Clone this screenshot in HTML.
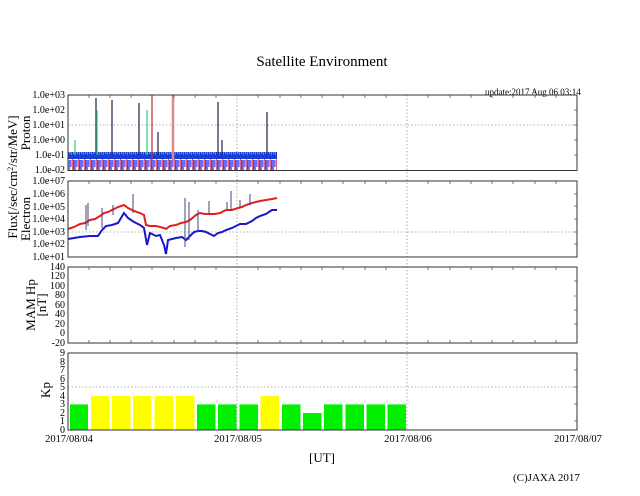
<!DOCTYPE html>
<html><head><meta charset="utf-8"><style>
html,body{margin:0;padding:0;background:#fff;width:640px;height:496px;overflow:hidden}
svg{display:block}
text{font-family:"Liberation Serif",serif;fill:#000}
</style></head><body>
<svg width="640" height="496" viewBox="0 0 640 496">
<defs>
<pattern id="st" width="6" height="20" patternUnits="userSpaceOnUse">
<rect width="6" height="20" fill="#fff"/>
<rect x="0" width="1.2" height="20" fill="#e0607a"/>
<rect x="1.2" width="1.5" height="11" fill="#2a2ad0"/>
<rect x="3" width="1" height="16" fill="#d55"/>
<rect x="4.2" width="1.3" height="7" fill="#44f"/>
</pattern>
<pattern id="st2" width="4" height="10" patternUnits="userSpaceOnUse">
<rect width="4" height="10" fill="#1c3cd8"/>
<rect x="1" width="1.2" height="4" fill="#30c080"/>
<rect x="3" y="2" width="1" height="3" fill="#3a6"/>
</pattern>
</defs>
<text x="322" y="66" font-size="15" text-anchor="middle">Satellite Environment</text>
<text x="485" y="95" font-size="9">update:2017 Aug 06 03:14</text>

<g stroke="#999" stroke-width="0.8" stroke-dasharray="1.5,2" fill="none">
<line x1="237" y1="95" x2="237" y2="430"/>
<line x1="407" y1="95" x2="407" y2="430"/>
<line x1="68" y1="125" x2="577" y2="125"/>
<line x1="68" y1="232" x2="577" y2="232"/>
<line x1="68" y1="387" x2="577" y2="387"/>
</g>

<rect x="68" y="158" width="209" height="12" fill="url(#st)"/>
<rect x="68" y="152" width="209" height="7" fill="url(#st2)"/>
<g stroke-width="1.2" fill="none">
<line x1="96" y1="98" x2="96" y2="155" stroke="#224"/>
<line x1="97" y1="110" x2="97" y2="155" stroke="#3c8"/>
<line x1="75" y1="140" x2="75" y2="155" stroke="#3c8"/>
<line x1="112" y1="100" x2="112" y2="155" stroke="#224"/>
<line x1="139" y1="103" x2="139" y2="155" stroke="#224"/>
<line x1="147" y1="110" x2="147" y2="155" stroke="#3c8"/>
<line x1="152" y1="95" x2="152" y2="160" stroke="#a33"/>
<line x1="158" y1="132" x2="158" y2="155" stroke="#224"/>
<line x1="173" y1="95" x2="173" y2="160" stroke="#d88" stroke-width="2.5"/>
<line x1="218" y1="102" x2="218" y2="155" stroke="#224"/>
<line x1="222" y1="140" x2="222" y2="155" stroke="#224"/>
<line x1="267" y1="112" x2="267" y2="155" stroke="#224"/>
</g>

<polyline fill="none" stroke="#e02020" stroke-width="2" points="68,229 74,227 80,224 85,223 90,220 95,219 100,216 104,213 108,212 112,210 118,207 124,205 128,208 134,211 140,213 144,215 146,225 150,226 156,226 160,227 164,228 166,229 170,226 176,225 181,223 186,222 190,220 196,215 200,213 205,214 210,214 215,214 220,213 226,210 232,210 238,208 242,207 246,205 252,203 256,202 260,201 266,200 272,199 277,198"/>
<polyline fill="none" stroke="#1818c8" stroke-width="2" points="68,239 74,238 80,237 90,236 98,236 102,230 106,226 112,225 118,223 124,213 128,218 134,222 140,225 144,228 147,245 150,233 156,236 160,235 164,245 166,254 168,240 172,239 176,238 182,237 186,240 190,236 194,232 198,231 202,231 206,232 210,234 214,236 218,233 222,232 226,230 232,228 236,226 240,224 246,224 252,221 256,218 260,216 266,214 272,210 277,210"/>
<g stroke="#447" stroke-width="1">
<line x1="86" y1="205" x2="86" y2="230"/><line x1="88" y1="203" x2="88" y2="226"/>
<line x1="102" y1="208" x2="102" y2="228"/><line x1="113" y1="205" x2="113" y2="215"/>
<line x1="133" y1="194" x2="133" y2="213"/><line x1="185" y1="198" x2="185" y2="247"/>
<line x1="189" y1="202" x2="189" y2="240"/><line x1="198" y1="210" x2="198" y2="232"/>
<line x1="209" y1="201" x2="209" y2="214"/><line x1="227" y1="202" x2="227" y2="210"/>
<line x1="231" y1="191" x2="231" y2="210"/><line x1="240" y1="200" x2="240" y2="208"/>
<line x1="250" y1="194" x2="250" y2="205"/>
</g>

<g>
<rect x="70" y="404.4" width="18" height="25.6" fill="#00f000"/>
<rect x="91" y="395.8" width="18.5" height="34.2" fill="#ffff00"/>
<rect x="112" y="395.8" width="18.5" height="34.2" fill="#ffff00"/>
<rect x="133" y="395.8" width="18.5" height="34.2" fill="#ffff00"/>
<rect x="154.5" y="395.8" width="18.5" height="34.2" fill="#ffff00"/>
<rect x="176" y="395.8" width="18.5" height="34.2" fill="#ffff00"/>
<rect x="197" y="404.4" width="18.5" height="25.6" fill="#00f000"/>
<rect x="218" y="404.4" width="18.5" height="25.6" fill="#00f000"/>
<rect x="239.5" y="404.4" width="18.5" height="25.6" fill="#00f000"/>
<rect x="260.5" y="395.8" width="18.5" height="34.2" fill="#ffff00"/>
<rect x="282" y="404.4" width="18.5" height="25.6" fill="#00f000"/>
<rect x="303" y="413" width="18.5" height="17" fill="#00f000"/>
<rect x="324" y="404.4" width="18.5" height="25.6" fill="#00f000"/>
<rect x="345.5" y="404.4" width="18.5" height="25.6" fill="#00f000"/>
<rect x="366.5" y="404.4" width="18.5" height="25.6" fill="#00f000"/>
<rect x="387.5" y="404.4" width="18.5" height="25.6" fill="#00f000"/>
</g>

<g fill="none" stroke="#333" stroke-width="1">
<rect x="68" y="95" width="509" height="75.5"/>
<rect x="68" y="181" width="509" height="76"/>
<rect x="68" y="267" width="509" height="76"/>
<rect x="68" y="353" width="509" height="77"/>
</g>
<g stroke="#555" stroke-width="0.8">
<path d="M89,95v3M110,95v3M131,95v3M152,95v3M174,95v3M195,95v3M216,95v3M258,95v3M280,95v3M301,95v3M322,95v3M343,95v3M365,95v3M386,95v3M428,95v3M450,95v3M471,95v3M492,95v3M513,95v3M535,95v3M556,95v3"/>
<path d="M89,181v3M110,181v3M131,181v3M152,181v3M174,181v3M195,181v3M216,181v3M258,181v3M280,181v3M301,181v3M322,181v3M343,181v3M365,181v3M386,181v3M428,181v3M450,181v3M471,181v3M492,181v3M513,181v3M535,181v3M556,181v3"/>
<path d="M89,267v3M110,267v3M131,267v3M152,267v3M174,267v3M195,267v3M216,267v3M258,267v3M280,267v3M301,267v3M322,267v3M343,267v3M365,267v3M386,267v3M428,267v3M450,267v3M471,267v3M492,267v3M513,267v3M535,267v3M556,267v3"/>
<path d="M89,343v-3M110,343v-3M131,343v-3M152,343v-3M174,343v-3M195,343v-3M216,343v-3M258,343v-3M280,343v-3M301,343v-3M322,343v-3M343,343v-3M365,343v-3M386,343v-3M428,343v-3M450,343v-3M471,343v-3M492,343v-3M513,343v-3M535,343v-3M556,343v-3"/>
<path d="M577,110h-3M577,125h-3M577,140h-3M577,155h-3M577,194h-3M577,206h-3M577,219h-3M577,232h-3M577,244h-3M577,281h-3M577,296h-3M577,310h-3M577,324h-3M577,370h-3M577,387h-3M577,404h-3M577,421h-3"/>
</g>

<g font-size="10" text-anchor="end">
<text x="65" y="98">1.0e+03</text><text x="65" y="113">1.0e+02</text><text x="65" y="128">1.0e+01</text>
<text x="65" y="143">1.0e+00</text><text x="65" y="158">1.0e-01</text><text x="65" y="173">1.0e-02</text>
<text x="65" y="184">1.0e+07</text><text x="65" y="197">1.0e+06</text><text x="65" y="210">1.0e+05</text>
<text x="65" y="222">1.0e+04</text><text x="65" y="235">1.0e+03</text><text x="65" y="247">1.0e+02</text>
<text x="65" y="260">1.0e+01</text>
<text x="65" y="270">140</text><text x="65" y="279">120</text><text x="65" y="289">100</text>
<text x="65" y="298">80</text><text x="65" y="308">60</text><text x="65" y="317">40</text>
<text x="65" y="327">20</text><text x="65" y="336">0</text><text x="65" y="346">-20</text>
<text x="65" y="356">9</text><text x="65" y="365">8</text><text x="65" y="373">7</text>
<text x="65" y="382">6</text><text x="65" y="390">5</text><text x="65" y="399">4</text>
<text x="65" y="407">3</text><text x="65" y="416">2</text><text x="65" y="424">1</text>
<text x="65" y="433">0</text>
</g>
<g font-size="10.5" text-anchor="middle">
<text x="69" y="442">2017/08/04</text><text x="238" y="442">2017/08/05</text>
<text x="408" y="442">2017/08/06</text><text x="578" y="442">2017/08/07</text>
</g>
<text x="322" y="462" font-size="13" text-anchor="middle">[UT]</text>
<text x="513" y="481" font-size="11">(C)JAXA 2017</text>

<g font-size="13" text-anchor="middle">
<text transform="translate(17,177) rotate(-90)">Flux[/sec/cm<tspan font-size="8" dy="-4">2</tspan><tspan dy="4">/str/MeV]</tspan></text>
<text transform="translate(30,133) rotate(-90)">Proton</text>
<text transform="translate(30,219) rotate(-90)">Electron</text>
<text transform="translate(35,305) rotate(-90)">MAM Hp</text>
<text transform="translate(46,305) rotate(-90)">[nT]</text>
<text transform="translate(50,390) rotate(-90)">Kp</text>
</g>
</svg>
</body></html>
